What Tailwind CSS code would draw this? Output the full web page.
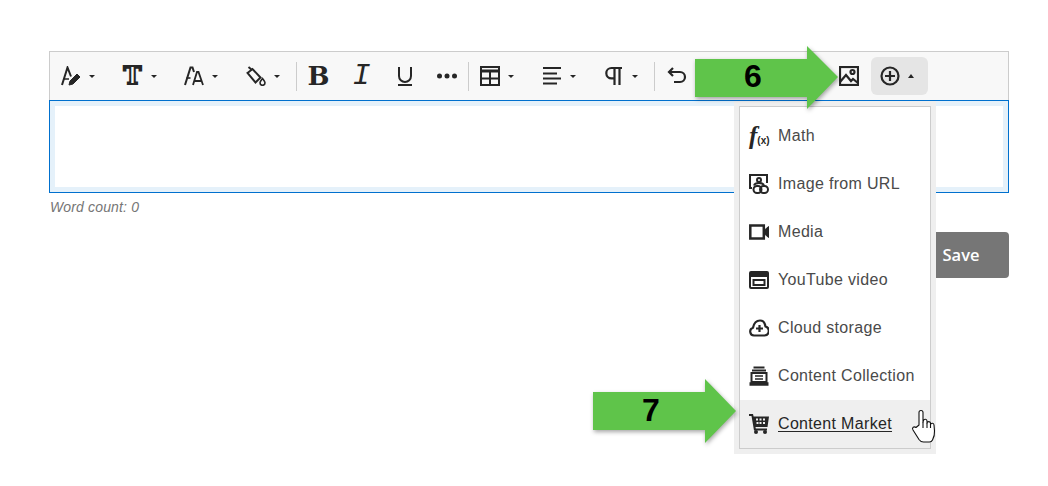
<!DOCTYPE html>
<html lang="en">
<head>
    <meta charset="UTF-8">
    <title>Content Editor</title>
    <script src="https://cdn.jsdelivr.net/npm/@tailwindcss/browser@4"></script>
</head>
<body class="bg-white font-['Liberation_Sans',sans-serif]">

<div class="relative w-[1048px] h-[486px] overflow-hidden pt-[51px] pl-[49px]">

  <div class="w-[960px]">

    <!-- Toolbar -->
    <div class="flex items-center h-[49px] border border-b-0 border-[#cccccc] bg-[#f8f8f8] text-[#262626]">

        <div class="w-[61.5px] h-full flex items-center pl-[11px]">
            <svg class="w-5 h-5" viewBox="0 0 20 20" fill="none" stroke="#262626" stroke-width="2"><path d="M1 19 6.500 1.500l3.500 9"/><path d="M3 13h5" stroke-width="1.500"/><path d="M8 19l1-4 7-7 3 3-7 7z" fill="#262626" stroke-width="1"/></svg>
            <span class="ml-[8px] border-x-[3px] border-x-transparent border-t-[3px] border-t-[#262626]"></span>
        </div>
        <div class="w-[61.5px] h-full flex items-center pl-[11px]">
            <span class="w-5 text-center text-[24px] leading-5 font-bold font-['DejaVu_Serif',serif] text-[#f8f8f8] [-webkit-text-stroke:2px_#262626]">T</span>
            <span class="ml-[8px] border-x-[3px] border-x-transparent border-t-[3px] border-t-[#262626]"></span>
        </div>
        <div class="w-[61.5px] h-full flex items-center pl-[11px]">
            <svg class="w-5 h-5" viewBox="0 0 20 20" fill="none" stroke="#262626" stroke-width="2"><path d="M1 19 6.500 1.500h2L10 6"/><path d="M2.500 12h4" stroke-width="1.600"/><path d="M9 19l4-13h1.500L19 19M10.500 15h7" stroke-width="1.800"/></svg>
            <span class="ml-[8px] border-x-[3px] border-x-transparent border-t-[3px] border-t-[#262626]"></span>
        </div>
        <div class="w-[61.5px] h-full flex items-center pl-[11px]">
            <svg class="w-5 h-5" viewBox="0 0 20 20" fill="none" stroke="#262626" stroke-width="2"><path d="M1.500 7 6.500 3l8 8.500-5 5z"/><path d="M2.500 1 6 4"/><path d="M16.500 12.500c-1.500 2-2.500 3-2.500 4.300a2.500 2.500 0 0 0 5 0c0-1.300-1-2.300-2.500-4.300z" stroke-width="1.600"/></svg>
            <span class="ml-[8px] border-x-[3px] border-x-transparent border-t-[3px] border-t-[#262626]"></span>
        </div>

        <span class="w-px h-[29px] bg-[#cccccc]"></span>

        <div class="w-[43px] flex justify-center text-[26px] leading-5 font-bold font-['DejaVu_Serif',serif]">B</div>
        <div class="w-[43px] flex justify-center text-[30px] leading-5 italic font-['Liberation_Mono',monospace]">I</div>
        <div class="w-[43px] flex justify-center">
            <svg class="w-5 h-5" viewBox="0 0 20 20" fill="none" stroke="#262626" stroke-width="2"><path d="M4 1v9a6 6 0 0 0 12 0V1"/><path d="M3 19h14"/></svg>
        </div>
        <div class="w-[42px] flex justify-center">
            <svg class="w-5 h-5" viewBox="0 0 20 20" fill="#262626"><circle cx="2.500" cy="10" r="2.500"/><circle cx="10" cy="10" r="2.500"/><circle cx="17.500" cy="10" r="2.500"/></svg>
        </div>

        <span class="w-px h-[29px] bg-[#cccccc]"></span>

        <div class="w-[62px] h-full flex items-center pl-[11px]">
            <svg class="w-5 h-5" viewBox="0 0 20 20" fill="none" stroke="#262626" stroke-width="2"><rect x="1" y="1" width="18" height="18"/><path d="M1 5h18" stroke-width="3"/><path d="M1 12.500h18M10 6v13"/></svg>
            <span class="ml-[8px] border-x-[3px] border-x-transparent border-t-[3px] border-t-[#262626]"></span>
        </div>
        <div class="w-[62px] h-full flex items-center pl-[11px]">
            <svg class="w-5 h-5" viewBox="0 0 20 20" fill="none" stroke="#262626" stroke-width="2"><path d="M1 2h18M1 7.500h14M1 12.500h18M1 17.500h14"/></svg>
            <span class="ml-[8px] border-x-[3px] border-x-transparent border-t-[3px] border-t-[#262626]"></span>
        </div>
        <div class="w-[61px] h-full flex items-center pl-[11px]">
            <svg class="w-5 h-5" viewBox="0 0 20 20" fill="none" stroke="#262626" stroke-width="2.200"><path d="M18 2H7.500a5.200 5.200 0 0 0 0 10.400H11M10.500 2v17M15.500 2v17"/></svg>
            <span class="ml-[8px] border-x-[3px] border-x-transparent border-t-[3px] border-t-[#262626]"></span>
        </div>

        <span class="w-px h-[29px] bg-[#cccccc]"></span>

        <div class="w-[44px] flex justify-center">
            <svg class="w-5 h-5" viewBox="0 0 20 20" fill="none" stroke="#262626" stroke-width="2.200"><path d="M6 2 2 6l4 4"/><path d="M2 6h11a5 5 0 0 1 0 10H7"/></svg>
        </div>

        <div class="w-[128px]"></div>

        <div class="w-[44px] flex justify-center">
            <svg class="w-5 h-5" viewBox="0 0 20 20" fill="none" stroke="#262626" stroke-width="2.200"><rect x="1" y="1" width="18" height="18"/><path d="M1 16l6-7 5 6 2-2 5 4"/><circle cx="13.500" cy="6" r="2"/></svg>
        </div>

        <div class="w-[57px] h-[38px] rounded-md bg-[#e5e5e5] flex items-center pl-[9px]">
            <svg class="w-5 h-5" viewBox="0 0 20 20" fill="none" stroke="#262626" stroke-width="2.200"><circle cx="10" cy="10" r="8.500"/><path d="M10 5v10M5 10h10"/></svg>
            <span class="ml-[8px] border-x-[3px] border-x-transparent border-b-[4px] border-b-[#262626]"></span>
        </div>
    </div>

    <!-- Editor -->
    <div class="h-[93px] border border-[#0070ce] bg-white">
        <div class="h-full border-[5px] border-[#e5f1fa] bg-white"></div>
    </div>

    <p class="mt-[4px] pl-px text-sm leading-5 italic tracking-[0.15px] text-[#767676]">Word count: 0</p>

    <!-- Save -->
    <div class="flex justify-end mt-[15px]">
        <div class="w-[96px] h-[46px] rounded bg-[#767676] text-white text-[16.500px] font-semibold font-['Open_Sans',sans-serif] flex items-center justify-center">Save</div>
    </div>

  </div>

    <!-- Insert menu -->
    <div class="absolute left-[734px] top-[101px] w-[202px] h-[353px] bg-[#efefef] p-[5px]">
        <div class="h-[343px] border border-[#cccccc] bg-white pt-[5px] text-base tracking-[0.33px] text-[#4a4a4a]">

            <div class="h-12 flex items-center pl-[9px] gap-[9px]">
                <span class="w-5 flex items-baseline tracking-normal text-[#262626] font-bold"><span class="text-[25px] leading-5 font-['Liberation_Serif',serif] italic">f</span><span class="text-[10px] leading-3">(x)</span></span>
                Math
            </div>

            <div class="h-12 flex items-center pl-[9px] gap-[9px]">
                <svg class="w-5 h-5" viewBox="0 0 20 20" fill="none" stroke="#262626" stroke-width="2"><path d="M3 14H1V1h17v8"/><circle cx="10" cy="6" r="2"/><path d="M5 11.500c.5-1.500 2-2.500 5-2.500s4 .5 5 2"/><rect x="4.500" y="12" width="8" height="7" rx="3.500"/><rect x="11" y="12" width="8" height="7" rx="3.500"/></svg>
                Image from URL
            </div>

            <div class="h-12 flex items-center pl-[9px] gap-[9px]">
                <svg class="w-5 h-5" viewBox="0 0 20 20" fill="none" stroke="#262626" stroke-width="2.500"><rect x="1.300" y="3.500" width="13.500" height="13"/><path d="M15 8.500 19.500 4.500v11L15 11.500z" fill="#262626" stroke-width="1"/></svg>
                Media
            </div>

            <div class="h-12 flex items-center pl-[9px] gap-[9px]">
                <svg class="w-5 h-5" viewBox="0 0 20 20" fill="none" stroke="#262626" stroke-width="2"><rect x="1" y="2" width="18" height="16" rx="1"/><path d="M1 5h18" stroke-width="4"/><rect x="4.500" y="10" width="11" height="5"/></svg>
                YouTube video
            </div>

            <div class="h-12 flex items-center pl-[9px] gap-[9px]">
                <svg class="w-5 h-5" viewBox="0 0 20 20" fill="none" stroke="#262626" stroke-width="2.200"><path d="M5 17.500a4 4 0 0 1-1-7.800C5 5 8 2.500 11 2.500c3 0 5 2.500 5.500 6a4.600 4.600 0 0 1-1 9z"/><path d="M10.500 7v7M7 10.500h7"/></svg>
                Cloud storage
            </div>

            <div class="h-12 flex items-center pl-[9px] gap-[9px]">
                <svg class="w-5 h-5" viewBox="0 0 20 20" fill="none" stroke="#262626" stroke-width="2"><path d="M4.500 1.500h11M3 4.500h14" stroke-width="2.200"/><rect x="2.500" y="7" width="15" height="9"/><path d="M6 10h8M6 13h8" stroke-width="1.500"/><path d="M.5 18h19" stroke-width="3.500"/></svg>
                Content Collection
            </div>

            <div class="h-12 flex items-center pl-[9px] gap-[9px] bg-[#efefef] text-[#262626] underline underline-offset-2">
                <svg class="w-5 h-5" viewBox="0 0 20 20" fill="#262626"><path d="M0 0h4l.6 2.500H20l-1.500 10.500H6.500l.3 1.500H18v2H5L2.500 2H0z"/><circle cx="7" cy="18" r="2"/><circle cx="16" cy="18" r="2"/><path d="M7 4.500h2v2H7zM10.500 4.500h2v2h-2zM14 4.500h2v2h-2zM7.500 8h2v2h-2zM10.500 8h2v2h-2zM14 8h2v2h-2z" fill="#efefef"/></svg>
                Content Market
            </div>
        </div>
    </div>

    <!-- Cursor -->
    <svg class="absolute left-[911px] top-[409px] w-[27px] h-[35px]" viewBox="0 0 27 35" fill="#ffffff" stroke="#111111" stroke-width="1.100" stroke-linejoin="round"><path d="M8 16V3.500a2 2 0 0 1 4 0V13l.5-1.500a1.800 1.800 0 0 1 3.500.500V14a1.800 1.800 0 0 1 3.500 0v1.500a1.800 1.800 0 0 1 3.500.500l.5 6c.3 3.500-.5 6-2 9-.5 1-1.500 2-3 2h-6c-2 0-3.500-1-4.500-2.500L2 21c-1.500-2.500 1-4 3-2.500z"/><path d="M12 13v6M16 14v5M19.500 15v4" fill="none"/></svg>

    <!-- Annotation arrows -->
    <svg class="absolute left-[695px] top-[46px] w-[146px] h-[68px] drop-shadow-[1px_2px_2px_rgba(0,0,0,0.35)]" viewBox="0 0 146 68"><polygon points="0,13 112,13 112,0 143,31 112,63 112,51 0,51" fill="#5fc44a"/></svg>
    <span class="absolute left-[695px] top-[57px] w-[116px] h-[38px] flex items-center justify-center text-[32px] font-bold text-black">6</span>

    <svg class="absolute left-[593px] top-[379px] w-[146px] h-[68px] drop-shadow-[1px_2px_2px_rgba(0,0,0,0.35)]" viewBox="0 0 146 68"><polygon points="0,13 112,13 112,0 143,32 112,64 112,51 0,51" fill="#5fc44a"/></svg>
    <span class="absolute left-[593px] top-[391px] w-[116px] h-[38px] flex items-center justify-center text-[32px] font-bold text-black">7</span>

</div>

</body>
</html>
